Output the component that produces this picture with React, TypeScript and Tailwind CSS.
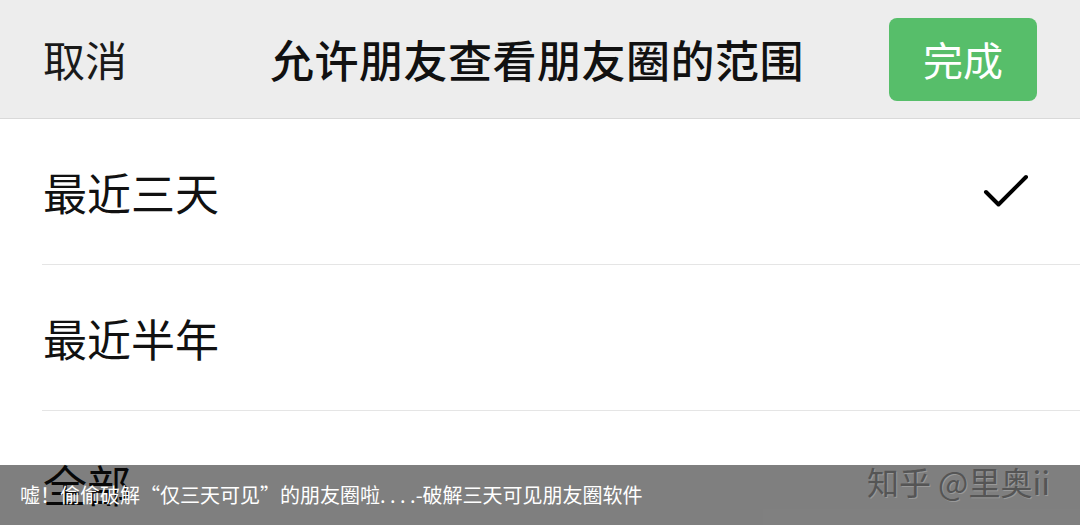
import { Check } from "lucide-react";

const FONT = "font-['Noto_Sans_CJK_SC','Noto_Sans',sans-serif]";

const OPTIONS = [
  { label: "最近三天", checked: true },
  { label: "最近半年", checked: false },
  { label: "全部", checked: false },
];

export default function App() {
  return (
    <div className={`${FONT} relative w-[1080px] h-[525px] overflow-hidden bg-white`}>
      <header className="h-[119px] bg-[#ededed] border-b border-[#d9d9d9] flex items-center pl-[43px] pr-[43px]">
        <span className="text-[42px] text-[#1a1a1a] w-[227px] leading-none">取消</span>
        <h1 className="text-[44px] font-medium text-[#111] leading-none tracking-[0.5px]">
          允许朋友查看朋友圈的范围
        </h1>
        <button className="ml-auto w-[148px] h-[83px] rounded-[8px] bg-[#57be6a] text-white text-[40px] leading-none">
          完成
        </button>
      </header>
      <ul className="pl-[42px]">
        {OPTIONS.map((o) => (
          <li
            key={o.label}
            className="h-[146px] border-b border-[#e5e5e5] flex items-center pr-[44px]"
          >
            <span className="text-[44px] text-[#111] leading-none pl-[1px]">{o.label}</span>
            {o.checked && (
              <Check className="ml-auto text-black" size={60} strokeWidth={1.6} />
            )}
          </li>
        ))}
      </ul>
      {/* caption bar over the screenshot */}
      <div className="absolute left-0 right-0 bottom-0 h-[60px] bg-black/50 flex items-center pl-[20px] pr-[30px]">
        <span className="text-[20px] text-white leading-none tracking-[0px]">
          嘘！偷偷破解“仅三天可见”的朋友圈啦. . . .-破解三天可见朋友圈软件
        </span>
        <span className="ml-auto -mt-[28px] text-[32px] text-[#555] leading-none [text-shadow:1px_1px_0_#999]">
          知乎 @里奥ii
        </span>
      </div>
    </div>
  );
}
